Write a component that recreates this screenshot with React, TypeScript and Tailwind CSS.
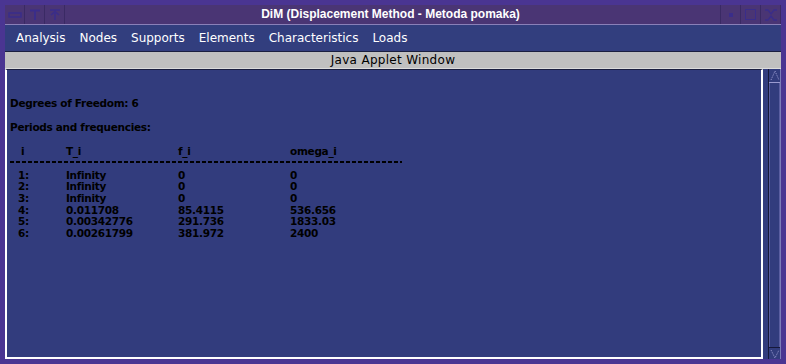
import React from "react";

const rows = [
  ["1:", "Infinity", "0", "0"],
  ["2:", "Infinity", "0", "0"],
  ["3:", "Infinity", "0", "0"],
  ["4:", "0.011708", "85.4115", "536.656"],
  ["5:", "0.00342776", "291.736", "1833.03"],
  ["6:", "0.00261799", "381.972", "2400"],
];

function TitleBtn({ children }: { children?: React.ReactNode }) {
  return (
    <div className="w-[20px] h-full border-r border-[#3a2a64] flex items-center justify-center">
      {children}
    </div>
  );
}

export default function App() {
  return (
    <div className="w-[786px] h-[364px] bg-[#4a3592] p-[5px] flex flex-col overflow-hidden">
      {/* title bar */}
      <div className="h-[20px] bg-[#4a3574] flex items-stretch border-b border-[#8a80b8] relative">
        <div className="flex">
          <TitleBtn>
            <svg width="14" height="8" viewBox="0 0 14 8"><rect x="1" y="2" width="12" height="4" fill="none" stroke="#3a2d8a" strokeWidth="1.5" /></svg>
          </TitleBtn>
          <TitleBtn>
            <svg width="12" height="12" viewBox="0 0 12 12"><path d="M1 1.5H11M6 1.5V11" stroke="#3a2d8a" strokeWidth="2" fill="none" /></svg>
          </TitleBtn>
          <TitleBtn>
            <svg width="12" height="12" viewBox="0 0 12 12"><path d="M1 1H11M2 6L6 2.5L10 6M6 3V11" stroke="#3a2d8a" strokeWidth="1.6" fill="none" /></svg>
          </TitleBtn>
        </div>
        <div className="flex-1 flex items-center justify-center text-white font-bold text-[12px] leading-none pb-[1px] font-['Liberation_Sans',sans-serif] pr-[4px]">
          DiM (Displacement Method - Metoda pomaka)
        </div>
        <div className="flex border-l border-[#3a2a64]">
          <TitleBtn>
            <div className="w-[4px] h-[4px] bg-[#3a2d8a]" />
          </TitleBtn>
          <TitleBtn>
            <div className="w-[11px] h-[11px] border border-[#3a2d8a]" />
          </TitleBtn>
          <TitleBtn>
            <svg width="14" height="12" viewBox="0 0 14 12"><path d="M1 1H4L7 5L10 1H13M1 11H4L7 7L10 11H13" stroke="#3a2d8a" strokeWidth="1.3" fill="none" /></svg>
          </TitleBtn>
        </div>
      </div>

      {/* menu bar */}
      <div className="h-[27px] bg-[#323e7e] border-b border-[#1a1f40] flex items-center pl-[11px] gap-[14px] text-white text-[12px] font-['DejaVu_Sans',sans-serif]">
        <span>Analysis</span>
        <span>Nodes</span>
        <span>Supports</span>
        <span>Elements</span>
        <span>Characteristics</span>
        <span>Loads</span>
      </div>

      {/* java applet window bar */}
      <div className="h-[16px] bg-[#c0c0c0] flex items-center justify-center text-black text-[12px] font-['DejaVu_Sans',sans-serif] tracking-[0.3px] leading-none">
        Java Applet Window
      </div>

      {/* content */}
      <div className="flex-1 flex bg-[#323c7d] border-t border-[#dcdcdc]">
        <div className="flex-1 border-l-2 border-b-2 border-r-2 border-white border-t border-t-[#1a1f40] flex flex-col pl-[3px] pt-[27px] text-black font-['DejaVu_Sans',sans-serif] font-bold text-[10.5px] tracking-[-0.3px] leading-[12px]">
          <div>Degrees of Freedom: 6</div>
          <div className="mt-[12px]">Periods and frequencies:</div>
          <div className="mt-[12px] grid grid-cols-[56px_112px_112px_120px]">
            <div className="pl-[11px]">i</div>
            <div>T_i</div>
            <div>f_i</div>
            <div>omega_i</div>
          </div>
          <div className="mt-[4px] h-[1.5px] w-[392px] bg-[repeating-linear-gradient(90deg,#000_0_4px,transparent_4px_6px)]" />
          <div className="mt-[7px] flex flex-col">
            {rows.map((r) => (
              <div key={r[0]} className="grid grid-cols-[56px_112px_112px_120px] leading-[11.7px]">
                <div className="pl-[8px]">{r[0]}</div>
                <div>{r[1]}</div>
                <div>{r[2]}</div>
                <div>{r[3]}</div>
              </div>
            ))}
          </div>
        </div>
        {/* scrollbar */}
        <div className="w-[18px] flex justify-end">
          <div className="w-[13px] h-full border-l border-[#16183a] border-r border-r-[#7c7cb8] flex flex-col">
            <div className="h-[14px] border-b border-[#9a9ad0] flex items-center justify-center">
              <svg width="10" height="11" viewBox="0 0 10 11"><path d="M1 10L5 1L9 10" stroke="#9a9ad0" strokeWidth="1" strokeDasharray="1 1" fill="none" /></svg>
            </div>
            <div className="flex-1 border-x border-[#5a5ea0]" />
            <div className="h-[12px] border-t border-[#16183a] flex items-center justify-center">
              <svg width="10" height="10" viewBox="0 0 10 10"><path d="M1 1L5 9L9 1" stroke="#9a9ad0" strokeWidth="1" strokeDasharray="1 1" fill="none" /></svg>
            </div>
          </div>
        </div>
      </div>
    </div>
  );
}
